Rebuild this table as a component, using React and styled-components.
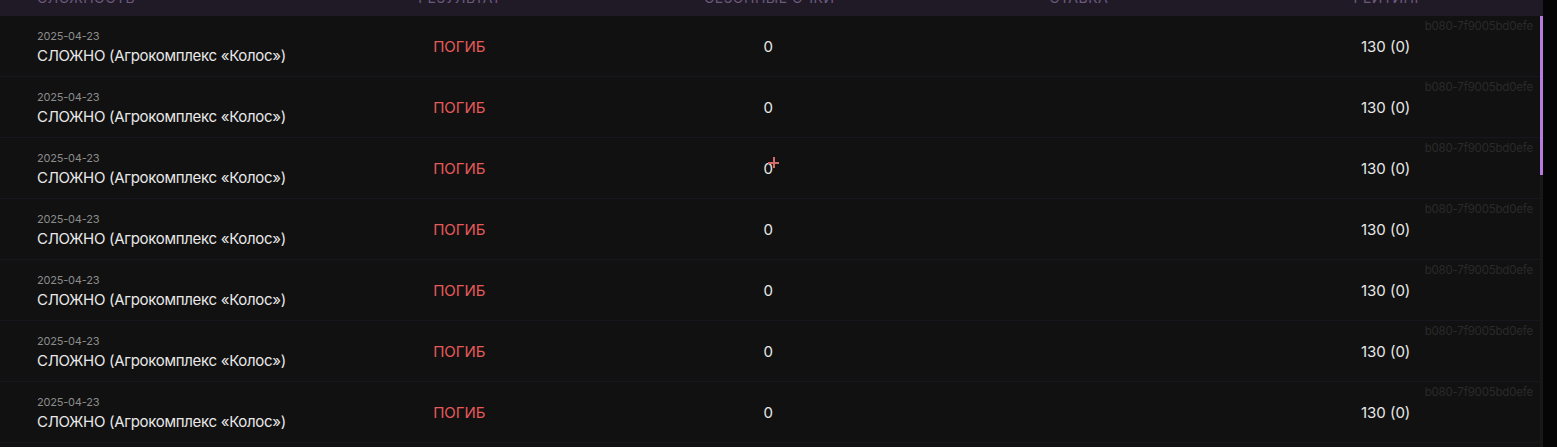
import React from 'react';
import styled, { createGlobalStyle } from 'styled-components';

const GlobalStyle = createGlobalStyle`
  html, body {
    margin: 0;
    padding: 0;
    background: #050505;
    font-family: Inter, "Noto Sans", sans-serif;
    overflow: hidden;
  }
`;

const Page = styled.div`
  width: 1543px;
  height: 447px;
  display: flex;
  flex-direction: column;
  background: #111111;
`;

const HeaderRow = styled.div`
  display: grid;
  grid-template-columns: 305px repeat(4, 1fr);
  height: 16px;
  overflow: hidden;
  background: #201a27;
  flex-shrink: 0;
`;

const HeaderCell = styled.div`
  margin-top: -11px;
  font-size: 14px;
  line-height: 18px;
  letter-spacing: 0.5px;
  text-transform: uppercase;
  color: #6b5a7d;
  text-align: ${props => (props.left ? 'left' : 'center')};
  padding-left: ${props => (props.left ? '37px' : '0')};
`;

const BodyWrap = styled.div`
  flex: 1;
  display: flex;
  min-height: 0;
`;

const List = styled.div`
  flex: 1;
  overflow: hidden;
`;

const ScrollTrack = styled.div`
  width: 3px;
  background: #181818;
  flex-shrink: 0;
`;

const ScrollThumb = styled.div`
  height: 159px;
  background: #b57be0;
`;

const Row = styled.div`
  position: relative;
  display: grid;
  grid-template-columns: 305px repeat(4, 1fr);
  align-items: center;
  height: 61px;
  box-sizing: border-box;
  border-bottom: 1px solid #19171d;
`;

const DiffCell = styled.div`
  padding-left: 37px;
  display: flex;
  flex-direction: column;
`;

const DateText = styled.span`
  font-size: 11px;
  line-height: 18px;
  margin-bottom: 1px;
  color: #8c8c8c;
  letter-spacing: -0.2px;
`;

const Title = styled.span`
  font-size: 15px;
  line-height: 20px;
  color: #e8e8e8;
  letter-spacing: -0.3px;
`;

const Cell = styled.div`
  position: relative;
  text-align: center;
  font-size: 15px;
  color: ${props => props.color || '#e8e8e8'};
  padding-top: 1px;
`;

const RowId = styled.span`
  position: absolute;
  top: 3px;
  right: 7px;
  font-size: 11.5px;
  color: #2a2a2a;
  letter-spacing: -0.2px;
`;

// hover cursor drawn over the points cell
const Cross = styled.span`
  position: absolute;
  left: 50%;
  top: -1px;
  width: 11px;
  height: 11px;
  margin-left: 0;

  &::before,
  &::after {
    content: '';
    position: absolute;
    background: #d26a6a;
  }
  &::before {
    left: 5px;
    top: 0;
    width: 1.5px;
    height: 11px;
  }
  &::after {
    top: 5px;
    left: 0;
    width: 11px;
    height: 1.5px;
  }
`;

const games = Array.from({ length: 19 }, (_, i) => ({
  id: 'b080-7f9005bd0efe',
  date: '2025-04-23',
  title: 'СЛОЖНО (Агрокомплекс «Колос»)',
  result: 'ПОГИБ',
  points: 0,
  bet: '',
  rating: '130 (0)',
  hover: i === 2,
}));

const App = () => {
  return (
    <>
      <GlobalStyle />
      <Page>
        <HeaderRow>
          <HeaderCell left>Сложность</HeaderCell>
          <HeaderCell>Результат</HeaderCell>
          <HeaderCell>Сезонные очки</HeaderCell>
          <HeaderCell>Ставка</HeaderCell>
          <HeaderCell>Рейтинг</HeaderCell>
        </HeaderRow>
        <BodyWrap>
          <List>
            {games.map((game, i) => (
              <Row key={i}>
                <DiffCell>
                  <DateText>{game.date}</DateText>
                  <Title>{game.title}</Title>
                </DiffCell>
                <Cell color="#e65a5a">{game.result}</Cell>
                <Cell>
                  {game.points}
                  {game.hover && <Cross />}
                </Cell>
                <Cell>{game.bet}</Cell>
                <Cell>{game.rating}</Cell>
                <RowId>{game.id}</RowId>
              </Row>
            ))}
          </List>
          <ScrollTrack>
            <ScrollThumb />
          </ScrollTrack>
        </BodyWrap>
      </Page>
    </>
  );
};

export default App;
